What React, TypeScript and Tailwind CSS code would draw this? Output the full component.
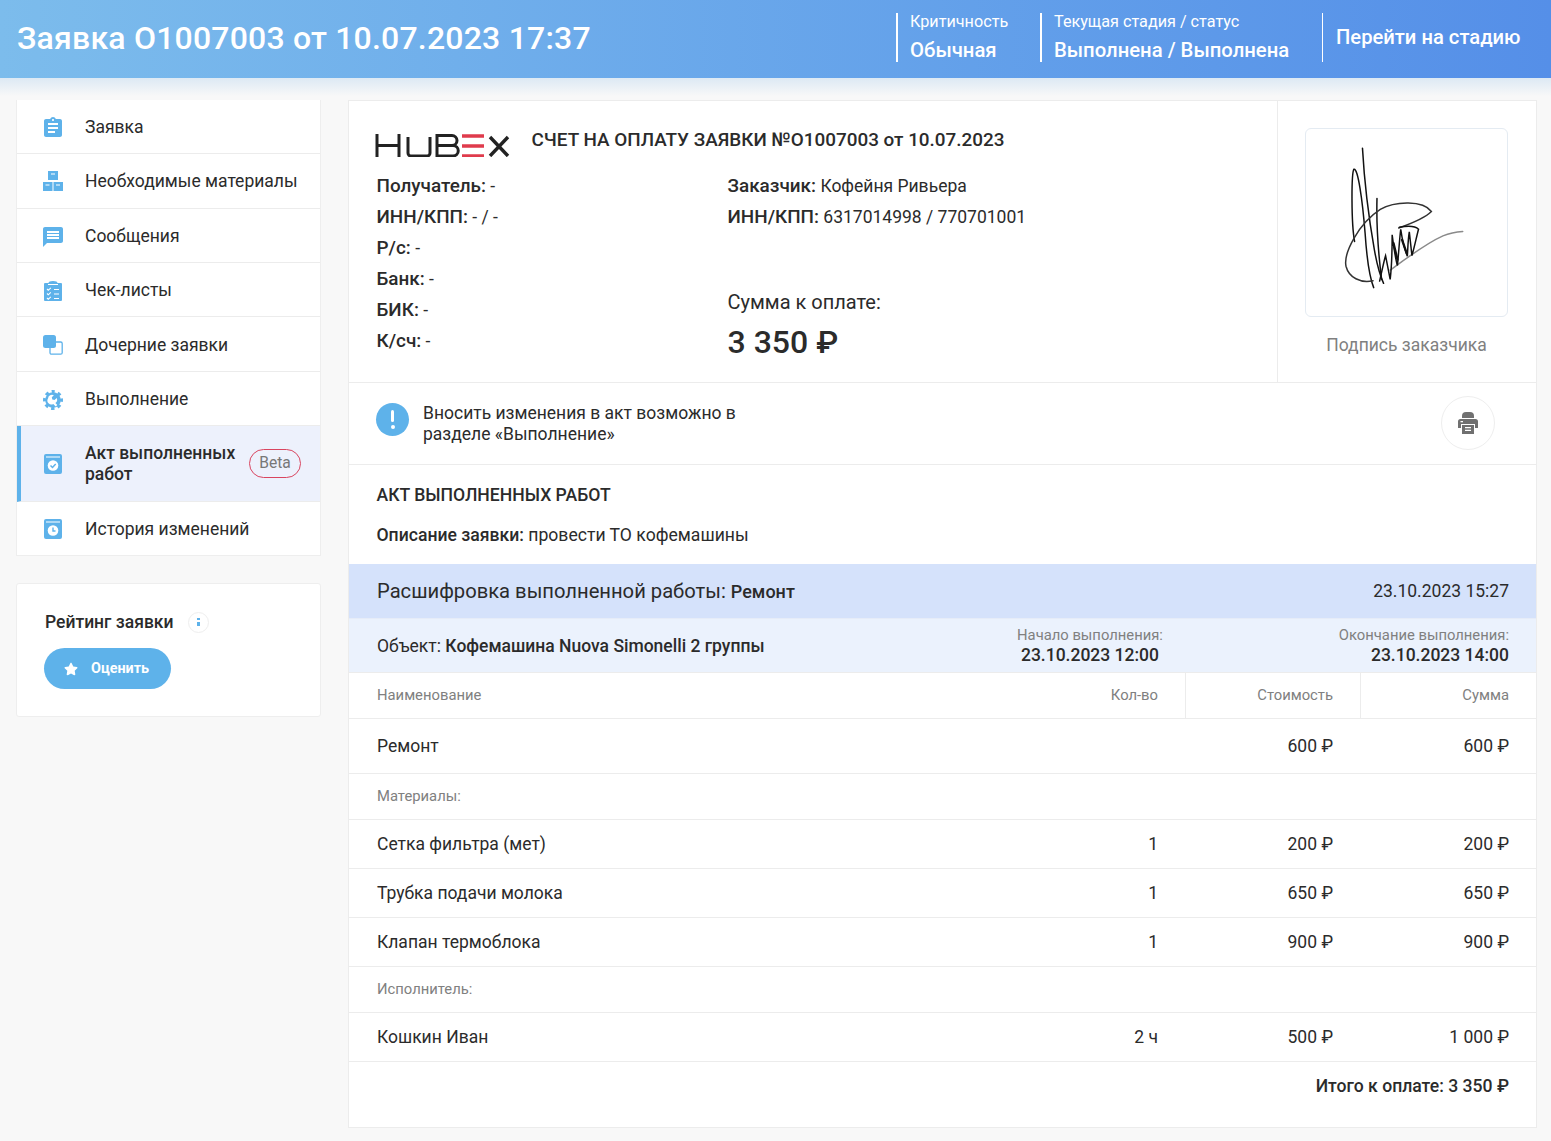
import { FaStar } from 'react-icons/fa'
import { MdAssignment, MdMessage } from 'react-icons/md'

const BLUE = '#5eb2ea'

function ChecklistIcon() {
  return (
    <svg viewBox="0 0 18 20" className="w-[18px] h-5">
      <path fill={BLUE} d="M1 2h3.500a4.500 2 0 0 1 9 0H17a1 1 0 0 1 1 1v16a1 1 0 0 1-1 1H1a1 1 0 0 1-1-1V3a1 1 0 0 1 1-1z" />
      <path fill="none" stroke="#fff" strokeWidth="1.100" d="M3 8l1.300 1.300L6.800 6.800M3 12.500l1.300 1.300 2.500-2.500M3 17l1.300 1.300L6.800 15.800M10 8.500h5M10 13h5M10 17.500h5" />
      <rect x="4" y="3" width="10" height="1" fill="#fff" />
    </svg>
  )
}

function BoxesIcon() {
  return (
    <svg viewBox="0 0 20 20" className="w-5 h-5">
      <path fill={BLUE} d="M5 0h10v9H5zM0 11h9.500v9H0zM10.500 11H20v9h-9.500z" />
      <path fill="#fff" d="M8 2.500h4v1H8zM2.500 13.500h4v1h-4zM13 13.500h4v1h-4z" />
    </svg>
  )
}

function CopyIcon() {
  return (
    <svg viewBox="0 0 20 20" className="w-5 h-5">
      <rect x="7" y="7" width="12.200" height="12.200" rx="1.500" fill="#fff" stroke={BLUE} strokeWidth="1.300" />
      <rect x="0" y="0" width="13" height="13" rx="2.500" fill={BLUE} />
    </svg>
  )
}

function GearIcon() {
  return (
    <svg viewBox="0 0 20 20" className="w-5 h-5">
      <circle cx="10" cy="10" r="7.800" fill={BLUE} />
      <circle cx="10" cy="10" r="8.500" fill="none" stroke={BLUE} strokeWidth="3" strokeDasharray="3.400 3.280" strokeDashoffset="1.700" transform="rotate(-90 10 10)" />
      <path fill="#fff" d="M5 8.400a4 4 0 0 1 5.900-3.200L8.800 7.300l.5 2.200 2.200.5 2.200-2.100a4 4 0 0 1-1.300 5l1.900 2.100-1.600 1.400-2.400-2.400A4 4 0 0 1 5 8.400z" />
    </svg>
  )
}

function PrintIcon() {
  return (
    <svg viewBox="0 0 20 22" className="w-5 h-[22px]">
      <path fill="#707070" d="M4 6V4a4 4 0 0 1 4-4h4a4 4 0 0 1 4 4v2z" />
      <path fill="#707070" d="M2.500 7h15A2.500 2.500 0 0 1 20 9.500V16h-3v-4H3v4H0V9.500A2.500 2.500 0 0 1 2.500 7z" />
      <path fill="#707070" d="M4 13h12v9H4z" />
      <path fill="#fff" d="M7 15h6v1.200H7zM7 17.800h6V19H7zM2.500 9h2.500v1.200H2.500z" />
    </svg>
  )
}

function BookIcon({ clock }: { clock?: boolean }) {
  return (
    <svg viewBox="0 0 18 20" className="w-[18px] h-5">
      <path fill={BLUE} d="M2 0h14a2 2 0 0 1 2 2v16a2 2 0 0 1-2 2H2a2 2 0 0 1-2-2V2a2 2 0 0 1 2-2z" />
      <rect x="2" y="2.500" width="14" height="1" fill="#fff" />
      <circle cx="9" cy="11.500" r="5.300" fill="#fff" />
      {clock ? (
        <path fill="none" stroke={BLUE} strokeWidth="1.400" d="M9 8.500v3.500h2.500" />
      ) : (
        <path fill="none" stroke={BLUE} strokeWidth="1.500" d="M6.500 11.500l2 2 3.200-3.400" />
      )}
    </svg>
  )
}

const navTop = [
  { label: 'Заявка', rowClass: 'h-[54px] pt-[2px]', icon: <MdAssignment size={24} color={BLUE} /> },
  { label: 'Необходимые материалы', rowClass: 'h-[55px]', icon: <BoxesIcon /> },
  { label: 'Сообщения', rowClass: 'h-[54px] pt-[2px]', icon: <MdMessage size={24} color={BLUE} /> },
  { label: 'Чек-листы', rowClass: 'h-[54px] pt-[2px]', icon: <ChecklistIcon /> },
  { label: 'Дочерние заявки', rowClass: 'h-[55px] pt-[2px]', icon: <CopyIcon /> },
  { label: 'Выполнение', rowClass: 'h-[54px] pt-[2px]', icon: <GearIcon /> },
]

function Signature() {
  return (
    <svg viewBox="75 54 609 567" className="w-full h-full" fill="none" stroke="#111" strokeLinecap="round">
      <path strokeWidth="4.500" d="M222 395C212 340 212 190 220 176C232 170 246 270 254 370C258 430 266 500 280 535" />
      <path strokeWidth="4.500" d="M246 112C252 220 268 340 282 420C290 465 300 500 310 522" />
      <path strokeWidth="4.500" d="M290 265C288 340 294 430 304 510" />
      <path strokeWidth="4.500" stroke="#333" d="M278 514C240 522 205 505 196 470C188 430 235 340 300 298C345 272 430 270 455 304C440 320 395 340 356 354" />
      <path strokeWidth="4.500" stroke="#8a8a8a" d="M330 482C380 445 440 400 490 378C515 368 535 366 550 365" />
      <path strokeWidth="4.500" d="M298 515C306 480 312 450 316 438L330 510C336 460 336 410 336 375C342 420 346 450 352 468C356 430 358 390 362 358C368 400 374 420 382 440C384 410 384 390 388 366L396 438C404 410 410 380 416 358C408 350 390 346 358 352" />
      <path strokeWidth="7" d="M340 400L352 450M366 390L380 430" />
    </svg>
  )
}

function Row({ name, qty, cost, sum }: { name: string; qty?: string; cost: string; sum: string }) {
  return (
    <div className="grid grid-cols-[1fr_100px_175px_176px] items-center h-[49px] border-b border-[#ececec] text-[17.500px] text-[#2b2b2b]">
      <div className="pl-7">{name}</div>
      <div className="text-right pr-[27px]">{qty}</div>
      <div className="text-right pr-[27px]">{cost}</div>
      <div className="text-right pr-[27px]">{sum}</div>
    </div>
  )
}

function SectionLabel({ text }: { text: string }) {
  return <div className="flex items-center h-[46px] pl-7 border-b border-[#ececec] text-[14.800px] text-[#808080]">{text}</div>
}

function Field({ label, value }: { label: string; value: string }) {
  return (
    <div className="h-[31px] text-[17.500px]">
      <b className="font-medium text-[18.900px]">{label}</b> {value}
    </div>
  )
}

export default function App() {
  return (
    <div className="min-h-[1141px] bg-[#f8f8f8] font-['Roboto',sans-serif] text-[#2b2b2b] overflow-hidden">
      {/* HEADER */}
      <div className="relative h-[78px] flex items-center justify-between text-white bg-gradient-to-r from-[#7cbcec] to-[#558fe8]">
        <h1 className="pl-[17px] -mt-[2px] text-[32px] font-medium tracking-[0.200px]">Заявка О1007003 от 10.07.2023 17:37</h1>
        <div className="flex items-center h-[49px] -mt-[3px]">
          <div className="w-[144px] h-full border-l-2 border-white pl-3">
            <div className="text-[16.200px] leading-[18px]">Критичность</div>
            <div className="text-[20.300px] font-medium leading-[24px] mt-[7px]">Обычная</div>
          </div>
          <div className="w-[282px] h-full border-l-2 border-white pl-3">
            <div className="text-[16.200px] leading-[18px]">Текущая стадия / статус</div>
            <div className="text-[20.300px] font-medium leading-[24px] mt-[7px]">Выполнена / Выполнена</div>
          </div>
          <div className="w-[229px] h-full border-l border-white pl-[13px] flex items-center text-[20.200px] font-medium">Перейти на стадию</div>
        </div>
        <div className="absolute left-0 right-0 top-[78px] h-[18px] bg-gradient-to-b from-[#dde9f4] to-[#f8f8f8]" />
      </div>

      <div className="relative flex items-start gap-[27px] pl-[16px] pr-[14px] pt-[22px]">
        {/* SIDEBAR */}
        <div className="w-[305px] shrink-0 flex flex-col gap-[27px]">
          <div className="bg-white border border-[#eeeeee] border-t-0 text-[17.500px]">
            {navTop.map((item) => (
              <div key={item.label} className={`flex items-center ${item.rowClass} border-b border-[#ececec]`}>
                <div className="w-[68px] pl-[4px] flex justify-center shrink-0">{item.icon}</div>
                <span>{item.label}</span>
              </div>
            ))}
            <div className="flex items-center h-[76px] border-b border-[#ececec] border-l-4 border-l-[#5eb2ea] bg-[#edf1fc]">
              <div className="w-[64px] flex justify-center shrink-0"><BookIcon /></div>
              <span className="w-[164px] font-medium leading-[21px]">Акт выполненных работ</span>
              <span className="w-[52px] h-[29px] pt-[1px] rounded-full border border-[#d9455f] flex items-center justify-center text-[15.600px] text-[#777777]">Beta</span>
            </div>
            <div className="flex items-center h-[53px] pt-[1px]">
              <div className="w-[68px] pl-[4px] flex justify-center shrink-0"><BookIcon clock /></div>
              <span>История изменений</span>
            </div>
          </div>

          <div className="h-[134px] bg-white border border-[#eeeeee] rounded-[3px] pl-7 pt-[26px]">
            <div className="flex items-center gap-[14px] h-[24px]">
              <span className="text-[17.500px] font-medium">Рейтинг заявки</span>
              <span className="w-[21px] h-[21px] rounded-full border border-[#eeeeee] flex flex-col items-center justify-center gap-[2px]">
                <i className="w-[3px] h-[2px] bg-[#5eb2ea]" />
                <i className="w-[3px] h-[4px] bg-[#5eb2ea]" />
              </span>
            </div>
            <button className="mt-[14px] -ml-[1px] w-[127px] h-[41px] rounded-full bg-[#5eb2ea] text-white flex items-center pl-5 gap-[13px] text-[14.400px] font-bold">
              <FaStar size={14} />
              Оценить
            </button>
          </div>
        </div>

        {/* MAIN */}
        <div className="relative w-[1189px] h-[1028px] bg-white border border-[#ececec]">
          <div className="flex h-[282px] border-b border-[#ececec]">
            <div className="flex-1 pl-[27.500px] pt-[27px]">
              <div className="flex items-start gap-[21.500px] h-[40px]">
                <svg viewBox="0 0 135 24" className="w-[135px] h-[24px] mt-[5px] -ml-[1.500px]" fill="none" stroke="#222" strokeWidth="3">
                  <path d="M2 1v23M24 1v23M2 12.500H24M33 4v16a3 3 0 0 0 3 3h16a3 3 0 0 0 3-3V4M62 2.500h15a4.500 4.500 0 0 1 0 10H62h16a5 5 0 0 1 0 10.500H62zM62 1v23" />
                  <path stroke="#df3b4c" strokeWidth="3.400" d="M87 3h22M87 13h22M87 23h22" />
                  <path strokeWidth="3.400" d="M115 4l18 19M133 4L115 23" />
                </svg>
                <div className="text-[18.900px] font-medium leading-[24px]">СЧЕТ НА ОПЛАТУ ЗАЯВКИ №О1007003 от 10.07.2023</div>
              </div>
              <div className="flex mt-[2px] leading-[31px]">
                <div className="w-[351px]">
                  <Field label="Получатель:" value="-" />
                  <Field label="ИНН/КПП:" value="- / -" />
                  <Field label="Р/с:" value="-" />
                  <Field label="Банк:" value="-" />
                  <Field label="БИК:" value="-" />
                  <Field label="К/сч:" value="-" />
                </div>
                <div>
                  <Field label="Заказчик:" value="Кофейня Ривьера" />
                  <Field label="ИНН/КПП:" value="6317014998 / 770701001" />
                  <div className="mt-[55px] text-[20px]">Сумма к оплате:</div>
                  <div className="text-[32px] font-medium leading-[40px] mt-[4px]">3 350 ₽</div>
                </div>
              </div>
            </div>
            <div className="w-[259px] border-l border-[#ececec] pl-[27px] pt-[27px]">
              <div className="w-[203px] h-[189px] rounded-[6px] border border-[#e4ebf2]"><Signature /></div>
              <div className="w-[203px] text-center mt-[15px] text-[17.500px] text-[#808080]">Подпись заказчика</div>
            </div>
          </div>

          <div className="flex items-center justify-between h-[82px] border-b border-[#ececec] pl-[27px] pr-[41px]">
            <div className="flex items-center gap-[14px]">
              <span className="w-[33px] h-[33px] rounded-full bg-[#5eb2ea] flex flex-col items-center justify-center gap-[3px] -mt-[9px]">
                <i className="w-[3px] h-[12px] bg-white rounded-sm" />
                <i className="w-[4px] h-[4px] bg-white rounded-full" />
              </span>
              <div className="w-[330px] text-[17.500px] leading-[21px]">Вносить изменения в акт возможно в разделе «Выполнение»</div>
            </div>
            <span className="w-[54px] h-[54px] -mt-[2px] rounded-full border border-[#eeeeee] flex items-center justify-center">
              <PrintIcon />
            </span>
          </div>

          <div className="h-[99px] pl-[27.500px] pt-[19px] text-[17.600px]">
            <div className="font-medium leading-[22px]">АКТ ВЫПОЛНЕННЫХ РАБОТ</div>
            <div className="mt-[18px] leading-[22px]"><b className="font-medium">Описание заявки:</b> провести ТО кофемашины</div>
          </div>

          <div className="flex items-center justify-between h-[55px] bg-[#d5e2fb] pl-7 pr-[27px] border-b border-[#e6ecf8]">
            <div className="text-[20.200px]">Расшифровка выполненной работы: <b className="font-medium text-[18px]">Ремонт</b></div>
            <div className="text-[17.500px]">23.10.2023 15:27</div>
          </div>

          <div className="flex items-center h-[54px] bg-[#ebf2fd] pl-7 pr-[27px] border-b border-[#ececec]">
            <div className="flex-1 pt-[2px] text-[17.500px]">Объект: <b className="font-medium">Кофемашина Nuova Simonelli 2 группы</b></div>
            <div className="w-[146px] text-center mr-[346px] pt-[1px]">
              <div className="text-[14.800px] leading-[19px] text-[#808080] whitespace-nowrap">Начало выполнения:</div>
              <div className="text-[17.500px] leading-[21px] font-medium whitespace-nowrap">23.10.2023 12:00</div>
            </div>
            <div className="w-0 flex flex-col items-end pt-[1px]">
              <div className="text-[14.800px] leading-[19px] text-[#808080] whitespace-nowrap">Окончание выполнения:</div>
              <div className="text-[17.500px] leading-[21px] font-medium whitespace-nowrap">23.10.2023 14:00</div>
            </div>
          </div>

          {/* TABLE */}
          <div className="grid grid-cols-[1fr_100px_175px_176px] h-[46px] items-center border-b border-[#ececec] text-[14.800px] text-[#808080]">
            <div className="pl-7">Наименование</div>
            <div className="text-right pr-[27px]">Кол-во</div>
            <div className="h-full flex items-center justify-end pr-[27px] border-l border-[#ececec]">Стоимость</div>
            <div className="h-full flex items-center justify-end pr-[27px] border-l border-[#ececec]">Сумма</div>
          </div>
          <div className="grid grid-cols-[1fr_100px_175px_176px] items-center h-[55px] border-b border-[#ececec] text-[17.500px]">
            <div className="pl-7">Ремонт</div>
            <div />
            <div className="text-right pr-[27px]">600 ₽</div>
            <div className="text-right pr-[27px]">600 ₽</div>
          </div>
          <SectionLabel text="Материалы:" />
          <Row name="Сетка фильтра (мет)" qty="1" cost="200 ₽" sum="200 ₽" />
          <Row name="Трубка подачи молока" qty="1" cost="650 ₽" sum="650 ₽" />
          <Row name="Клапан термоблока" qty="1" cost="900 ₽" sum="900 ₽" />
          <SectionLabel text="Исполнитель:" />
          <Row name="Кошкин Иван" qty="2 ч" cost="500 ₽" sum="1 000 ₽" />
          <div className="h-[48px] flex items-center justify-end pr-[27px] text-[17.600px] font-medium">Итого к оплате: 3 350 ₽</div>
        </div>
      </div>
    </div>
  )
}
